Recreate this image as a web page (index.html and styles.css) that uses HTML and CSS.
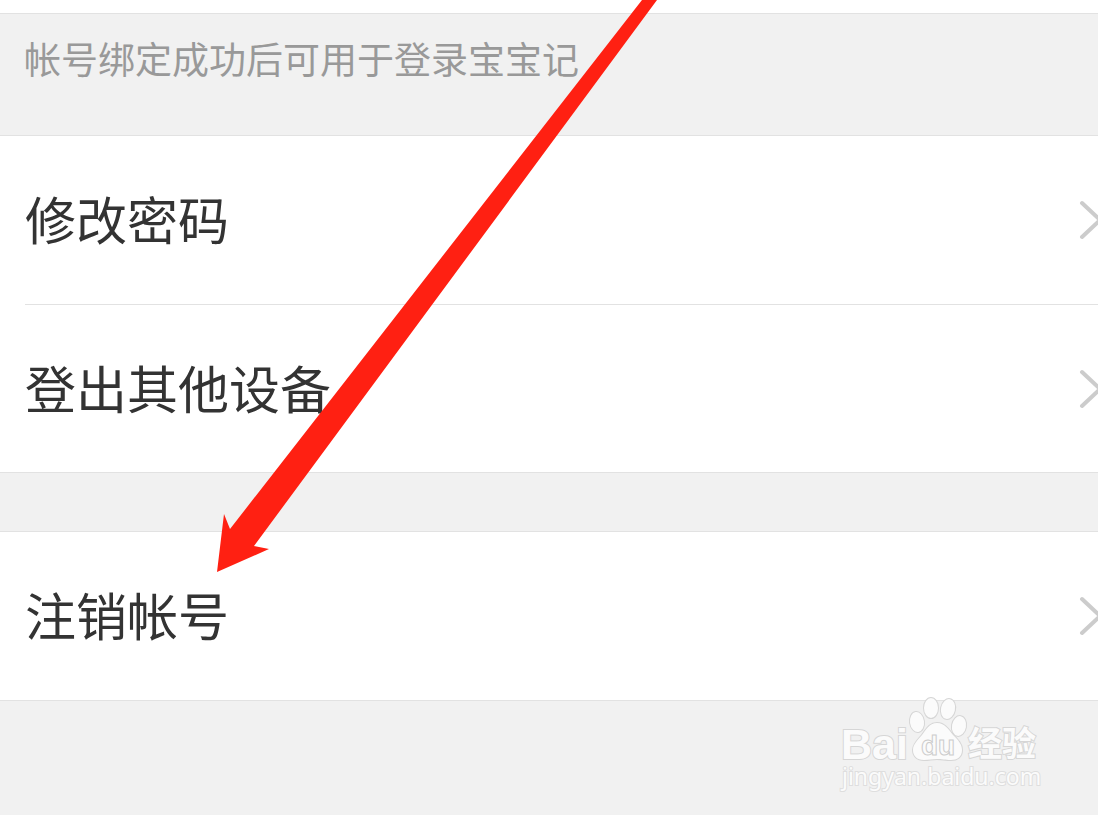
FILE: index.html
```
<!DOCTYPE html>
<html lang="zh-CN">
<head>
    <meta charset="UTF-8">
    <meta name="viewport" content="width=device-width, initial-scale=1">
    <title>帐号设置</title>
    <link rel="stylesheet" href="styles.css">
</head>
<body>
<main class="page">
    <p class="tip">帐号绑定成功后可用于登录宝宝记</p>
    <nav class="group">
        <a class="row" href="#password">
            <span class="row-title">修改密码</span>
            <svg class="chevron" viewBox="0 0 20 44"><path d="M4 5L22 22L4 39"/></svg>
        </a>
        <a class="row" href="#devices">
            <span class="row-title">登出其他设备</span>
            <svg class="chevron" viewBox="0 0 20 44"><path d="M4 5L22 22L4 39"/></svg>
        </a>
    </nav>
    <nav class="group">
        <a class="row" href="#cancel">
            <span class="row-title">注销帐号</span>
            <svg class="chevron" viewBox="0 0 20 44"><path d="M4 5L22 22L4 39"/></svg>
        </a>
    </nav>
    <footer class="footer">
        <svg class="watermark" viewBox="0 0 210 104">
            <g class="mark">
                <text class="mark-bai" x="3" y="63">Bai</text>
                <ellipse cx="79" cy="26" rx="7" ry="10" transform="rotate(-8 79 26)"/>
                <ellipse cx="93" cy="12" rx="7" ry="10"/>
                <ellipse cx="110" cy="13" rx="7" ry="10" transform="rotate(12 110 13)"/>
                <ellipse cx="121" cy="30" rx="7" ry="10" transform="rotate(10 121 30)"/>
                <path d="M99 27C107 27 111 34 115 39C120 44 124 48 124 54C124 61 119 64 113 64C107 64 104 63 99 63C94 63 91 64 86 64C79 64 75 60 75 54C75 48 80 44 84 39C88 34 91 27 99 27Z"/>
                <text class="mark-jingyan" x="130" y="60">经验</text>
            </g>
            <text class="mark-du" x="83" y="59">du</text>
            <text class="mark-url" x="4" y="89">jingyan.baidu.com</text>
        </svg>
    </footer>
    <!-- 指向“注销帐号”的箭头 -->
    <svg class="arrow" width="660" height="575" viewBox="0 0 660 575">
        <polygon points="642,0 657,0 254,546 269,549 217,572 224,514 230,529"/>
    </svg>
</main>
</body>
</html>
```
FILE: styles.css
```
* {
    box-sizing: border-box;
}

body {
    margin: 0;
    background: #fff;
    color: #333;
    font-family: "Noto Sans CJK SC", sans-serif;
}

.page {
    position: relative;
    display: flex;
    flex-direction: column;
    min-height: 100vh;
    padding-top: 13px;
    overflow: hidden;
}

.tip {
    margin: 0;
    padding: 18px 24px 50px;
    border-top: 1px solid #e2e2e2;
    background: #f1f1f1;
    color: #999;
    font-size: 37px;
    line-height: 53px;
}

.group {
    border-top: 1px solid #e2e2e2;
    border-bottom: 1px solid #e2e2e2;
    background: #fff;
}

.group + .group {
    margin-top: 58px;
    box-shadow: 0 -58px #f1f1f1;
}

.row {
    display: flex;
    align-items: center;
    justify-content: space-between;
    height: 168px;
    margin-left: 25px;
    color: #333;
    font-size: 51px;
    line-height: 76px;
    text-decoration: none;
}

.row + .row {
    border-top: 1px solid #e2e2e2;
}

.row-title {
    padding-bottom: 4px;
}

.chevron {
    width: 20px;
    height: 44px;
    fill: none;
    stroke: #ccc;
    stroke-width: 4;
    stroke-linecap: round;
}

.footer {
    position: relative;
    flex: 1;
    min-height: 114px;
    background: #f1f1f1;
}

.watermark {
    position: absolute;
    top: -5px;
    right: 50px;
    width: 210px;
    height: 104px;
}

.mark,
.mark-url {
    fill: #fbfbfb;
    stroke: #d6d6d6;
    stroke-width: 2;
    paint-order: stroke;
}

.mark-bai {
    font: bold 43px "Liberation Sans", sans-serif;
}

.mark-jingyan {
    font: bold 34px "Noto Sans CJK SC", sans-serif;
}

.mark-du {
    fill: #fbfbfb;
    stroke: #ccc;
    stroke-width: 1;
    font: bold 28px "Liberation Sans", sans-serif;
}

.mark-url {
    stroke: #dedede;
    font: 23px "Noto Sans", sans-serif;
}

.arrow {
    position: absolute;
    top: 0;
    left: 0;
    fill: #ff2012;
    pointer-events: none;
}
```
